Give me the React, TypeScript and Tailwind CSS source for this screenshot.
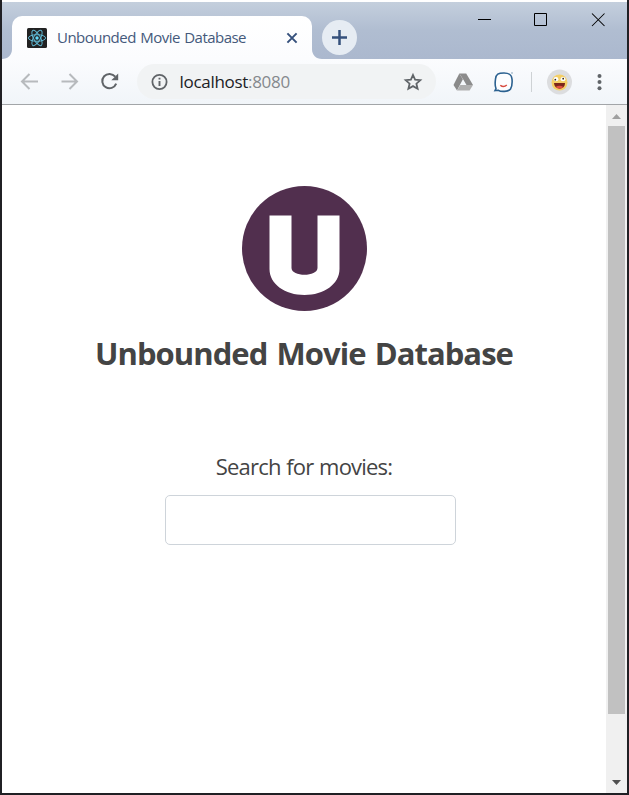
import React from "react";

function ReactLogo() {
  return (
    <svg className="block h-5 w-5 shrink-0" viewBox="0 0 20 20">
      <rect width="20" height="20" rx="1.5" fill="#222222" />
      <g fill="none" stroke="#5fb6d0" strokeWidth="1">
        <ellipse cx="10" cy="10" rx="8.6" ry="3.3" />
        <ellipse cx="10" cy="10" rx="8.6" ry="3.3" transform="rotate(60 10 10)" />
        <ellipse cx="10" cy="10" rx="8.6" ry="3.3" transform="rotate(120 10 10)" />
      </g>
      <circle cx="10" cy="10" r="1.7" fill="#61dafb" />
    </svg>
  );
}

function TitleBar() {
  return (
    <header className="flex h-[57px] shrink-0 items-start bg-linear-to-b from-[#c4cfdd] via-[#b0bdd1] via-50% to-[#abb8ce]">
      <svg className="mt-[47px] block h-[10px] w-[10px]" viewBox="0 0 10 10">
        <path d="M10 0V10H0C6 10 10 6 10 0Z" fill="#fbfcfe" />
      </svg>
      <div className="mt-[14px] flex h-[43px] w-[300px] items-center rounded-t-[10px] bg-linear-to-b from-white to-[#fbfcfe] pr-[14px] pl-[15px]">
        <ReactLogo />
        <span className="mb-[2px] ml-[10px] w-[190px] text-[15px] leading-5 tracking-[-0.52px] [word-spacing:1px] whitespace-nowrap text-[#44597b]">
          Unbounded Movie Database
        </span>
        <svg className="ml-auto block h-3 w-3" viewBox="0 0 12 12">
          <path d="M1.4 1.4L10.6 10.6M10.6 1.4L1.4 10.6" stroke="#35507c" strokeWidth="2" />
        </svg>
      </div>
      <svg className="mt-[47px] block h-[10px] w-[10px]" viewBox="0 0 10 10">
        <path d="M0 0V10H10C4 10 0 6 0 0Z" fill="#fbfcfe" />
      </svg>
      <svg className="mt-[18px] block h-[35px] w-[35px]" viewBox="0 0 35 35">
        <circle cx="17.5" cy="17.5" r="17.5" fill="#e6ecf3" />
        <path d="M17.5 10V25M10 17.5H25" stroke="#35507c" strokeWidth="2.5" />
      </svg>
      <svg className="mt-[8px] ml-auto block h-5 w-[150px]" viewBox="0 0 150 20" fill="none" stroke="#000">
        <path d="M1 9.5H14" />
        <path d="M57.5 3.5H69.5V15.5H57.5Z" />
        <path d="M115 3.5L127.5 16M127.5 3.5L115 16" strokeWidth="1.05" />
      </svg>
    </header>
  );
}

function Toolbar() {
  return (
    <nav className="flex h-[46px] shrink-0 items-center border-b border-[#a2a5a8] bg-linear-to-b from-[#fbfcfe] to-[#f1f5f9]">
      <svg className="block h-[46px] w-[135px] shrink-0" viewBox="0 0 135 46" fill="none">
        <path d="M27.500 22.500H36M28 22.500H20M27.500 15L20 22.500L27.500 30" stroke="#b7babd" strokeWidth="2" />
        <path d="M59.500 22.500H75M67.500 15L75 22.500L67.500 30" stroke="#b7babd" strokeWidth="2" />
        <path d="M113.200 17.700A7.200 7.200 0 1 0 114.200 24.700" stroke="#606468" strokeWidth="2" />
        <path d="M116.200 14.500V21.300H109.300Z" fill="#606468" />
      </svg>
      <div className="flex h-[35px] w-[299px] items-center rounded-full bg-[#f1f3f4] pr-[13px] pl-[14px]">
        <svg className="block h-[18px] w-[18px] shrink-0" viewBox="0 0 18 18" fill="none">
          <circle cx="8.500" cy="9" r="7.100" stroke="#606468" strokeWidth="1.800" />
          <path d="M8.500 8V13M8.500 4.800V6.600" stroke="#606468" strokeWidth="1.900" />
        </svg>
        <span className="ml-[10.500px] text-[17px] leading-6 tracking-[-0.3px] whitespace-nowrap text-[#202124]">
          localhost<span className="text-[#85898d]">:8080</span>
        </span>
        <svg className="ml-auto block h-5 w-5" viewBox="0 0 20 20">
          <path d="M10 3L12.100 7.700L17.300 8.200L13.400 11.700L14.600 16.700L10 14.100L5.400 16.700L6.600 11.700L2.700 8.200L7.900 7.700Z" fill="none" stroke="#606468" strokeWidth="1.800" />
        </svg>
      </div>
      <svg className="ml-[16px] block h-[20px] w-[22px] shrink-0" viewBox="0 0 22 20">
        <path d="M7.300 1.500L10.900 7.300L5 18.500L1.500 13Z" fill="#8a8a8a" />
        <path d="M8.300 13H21L17.600 18.500H5Z" fill="#b0b0b0" />
        <path d="M7.300 1.500H14.200L21 13H14.500L10.800 6.800Z" fill="#8c8c8c" />
      </svg>
      <svg className="ml-[18px] block h-[22px] w-[24px] shrink-0" viewBox="0 0 24 22">
        <path d="M4 17.500C3 15.500 3.100 11 3.500 8C4.200 3.200 6 2 12 2C17.500 2 19.500 3.500 20 8C20.400 12 20.300 15 18.500 18C16.500 21 8.500 20.800 6.500 19.300L3 19.600L4 17.500Z" fill="#fdfeff" stroke="#2b6190" strokeWidth="1.600" />
        <path d="M8.300 14.200Q11.500 17 14.800 14" fill="none" stroke="#d84b3f" strokeWidth="1.500" />
        <path d="M19 2H21" stroke="#8ba7bd" />
      </svg>
      <div className="ml-[15px] h-5 w-px bg-[#ced2d5]" />
      <svg className="ml-[15px] block h-[26px] w-[26px] shrink-0" viewBox="0 0 26 26">
        <circle cx="12.500" cy="13" r="12.500" fill="#dcdddf" />
        <circle cx="12.500" cy="13.500" r="8" fill="#f4cf67" />
        <ellipse cx="9" cy="10.200" rx="2.400" ry="2.100" fill="#fff" />
        <ellipse cx="16" cy="10.200" rx="2.400" ry="2.100" fill="#fff" />
        <circle cx="8.300" cy="10.700" r=".9" fill="#31271b" />
        <circle cx="16.200" cy="9.700" r=".9" fill="#31271b" />
        <path d="M7 14H18C18 21.500 7.500 21.500 7 14Z" fill="#7b2519" />
        <path d="M8.500 18Q12.500 15.500 16.500 18Q12.500 21 8.500 18Z" fill="#e14f42" />
      </svg>
      <svg className="ml-[24px] block h-5 w-[5px] shrink-0" viewBox="0 0 5 20" fill="#606468">
        <circle cx="2.500" cy="4" r="2" />
        <circle cx="2.500" cy="10" r="2" />
        <circle cx="2.500" cy="16.200" r="2" />
      </svg>
    </nav>
  );
}

function Scrollbar() {
  return (
    <aside className="flex w-[21px] shrink-0 flex-col items-center bg-[#f0f0f0]">
      <svg className="block h-[21px] w-[21px] shrink-0" viewBox="0 0 21 21">
        <path d="M6 14H15L10.500 9Z" fill="#a0a0a0" />
      </svg>
      <div className="h-[588px] w-[17px] bg-[#c1c1c1]" />
      <svg className="mt-auto block h-[21px] w-[21px] shrink-0" viewBox="0 0 21 21">
        <path d="M6 8H15L10.500 13Z" fill="#505050" />
      </svg>
    </aside>
  );
}

export default function App() {
  return (
    <div className="flex h-[795px] w-[629px] flex-col border-x-2 border-b-2 border-[#202024] bg-white pt-[2px] font-['Open_Sans','Noto_Sans',sans-serif]">
      <TitleBar />
      <Toolbar />
      <div className="flex min-h-0 flex-1">
        <main className="flex w-[604px] flex-col items-center text-[#444444]">
          <svg className="mt-[81px] block h-[125px] w-[125px]" viewBox="0 0 125 125">
            <circle cx="62.500" cy="62.500" r="62.500" fill="#512f4e" />
            <path d="M27.500 29.500H49.500V82C49.500 91 75.500 91 75.500 82V29.500H97.500V83C97.500 98 82 109 62.500 109S27.500 98 27.500 83Z" fill="#fff" />
          </svg>
          <h1 className="mt-[21px] text-[31px] leading-[42px] font-bold tracking-[-0.95px] [word-spacing:2px] whitespace-nowrap">
            Unbounded Movie Database
          </h1>
          <label htmlFor="movie-search" className="mt-[76px] text-[22px] leading-8 tracking-[-0.8px] [word-spacing:0.7px]">
            Search for movies:
          </label>
          <input id="movie-search" className="mt-[13px] ml-[13px] block h-[50px] w-[291px] rounded-[5px] border border-[#ced4da] bg-white px-3 outline-none" />
        </main>
        <Scrollbar />
      </div>
    </div>
  );
}
